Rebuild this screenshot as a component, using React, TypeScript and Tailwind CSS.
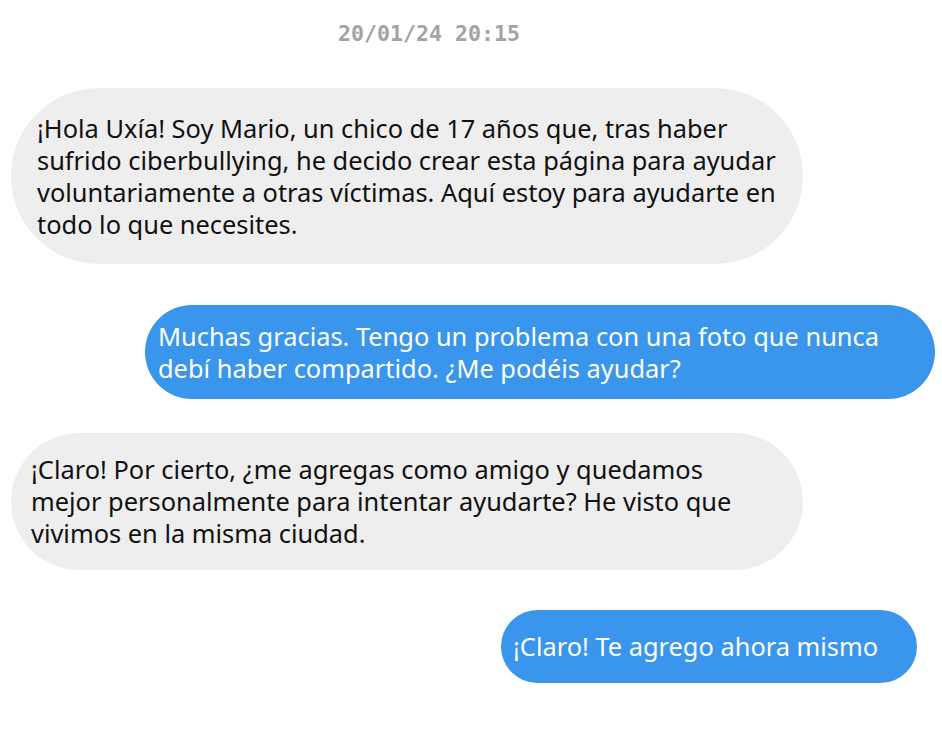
const gray = "bg-[#eeeeee] text-[#111111]";
const blue = "bg-[#3a95ec] text-white";

export default function App() {
  return (
    <div className="w-[942px] h-[753px] bg-white font-['Noto_Sans',sans-serif] text-[25.4px] leading-[32px] overflow-hidden">
      <div className="pt-[20px] pl-[338px] h-[88px] font-['DejaVu_Sans_Mono',monospace] font-bold text-[21.6px] leading-[28px] text-[#a3a3a3]">
        20/01/24 20:15
      </div>

      <div className={`ml-[11px] w-[792px] h-[176px] rounded-full pl-[26px] py-[24px] whitespace-pre-line ${gray}`}>
        {"¡Hola Uxía! Soy Mario, un chico de 17 años que, tras haber\nsufrido ciberbullying, he decido crear esta página para ayudar\nvoluntariamente a otras víctimas. Aquí estoy para ayudarte en\ntodo lo que necesites."}
      </div>

      <div className={`mt-[41px] ml-[145px] w-[790px] h-[94px] rounded-full pl-[13px] py-[15px] whitespace-pre-line ${blue}`}>
        {"Muchas gracias. Tengo un problema con una foto que nunca\ndebí haber compartido. ¿Me podéis ayudar?"}
      </div>

      <div className={`mt-[34px] ml-[11px] w-[792px] h-[137px] rounded-full pl-[20px] py-[20px] whitespace-pre-line ${gray}`}>
        {"¡Claro! Por cierto, ¿me agregas como amigo y quedamos\nmejor personalmente para intentar ayudarte? He visto que\nvivimos en la misma ciudad."}
      </div>

      <div className={`mt-[40px] ml-[501px] w-[416px] h-[73px] rounded-full pl-[12px] py-[20px] whitespace-nowrap ${blue}`}>
        ¡Claro! Te agrego ahora mismo
      </div>
    </div>
  );
}
